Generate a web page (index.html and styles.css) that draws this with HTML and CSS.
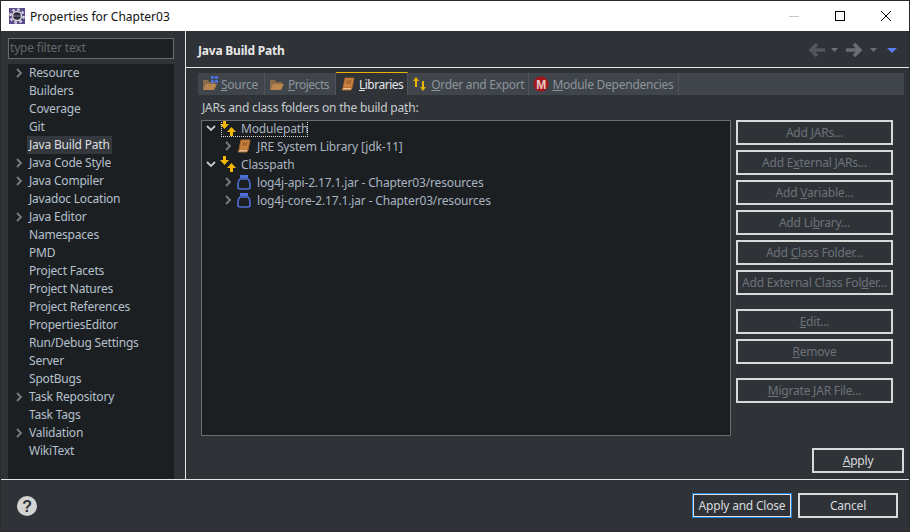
FILE: index.html
```html
<!DOCTYPE html>
<html lang="en">
<head>
    <meta charset="UTF-8">
    <title>Properties for Chapter03</title>
    <link rel="stylesheet" href="styles.css">
</head>
<body>
<svg class="defs" width="0" height="0">
    <symbol id="chev-r" viewBox="0 0 10 10"><path d="M3 1l4 4-4 4" fill="none" stroke="#7b7e81" stroke-width="1.8"/></symbol>
    <symbol id="chev-d" viewBox="0 0 10 10"><path d="M1 3l4 4 4-4" fill="none" stroke="#c4c6c8" stroke-width="1.8"/></symbol>
    <symbol id="folder" viewBox="0 0 16 16"><path d="M1 13V4h5l1 2h6v2H5l-3 5z" fill="#8a6a48"/><path d="M1 14l3-6h11l-3 6z" fill="#b9854f"/></symbol>
    <symbol id="book" viewBox="0 0 16 16"><path d="M5 2h9l-2 10H3z" fill="#c9813f" stroke="#a8662c"/><path d="M3 12l-1 2h9l1-2" fill="#e2c09a" stroke="#a8662c"/><path d="M6.500 5h5M6 7h5" stroke="#8a5526"/></symbol>
    <symbol id="paths" viewBox="0 0 16 16"><path d="M3 0h3v4h3L4.500 9 0 4h3z" fill="#f5b800"/><path d="M11.500 7l4.500 5h-3v4h-3v-4H7z" fill="#f5b800"/></symbol>
    <symbol id="jar" viewBox="0 0 14 16"><rect x="3" y="1" width="8" height="3" fill="#4f6fd8"/><path d="M3 5C1 7 1 8 1 10v3c0 1 1 2 2 2h8c1 0 2-1 2-2v-3c0-2 0-3-2-5z" fill="none" stroke="#4f6fd8" stroke-width="1.600"/></symbol>
</svg>
<div class="window">
    <div class="titlebar">
        <svg class="app-icon" width="16" height="16" viewBox="0 0 16 16">
            <rect width="16" height="16" fill="#5b4a8c"/>
            <circle cx="8" cy="8" r="6.600" fill="none" stroke="#d8d8dc" stroke-width="2.400" stroke-dasharray="2.600 2.580"/>
            <circle cx="8" cy="8" r="5.200" fill="#d8d8dc"/>
            <circle cx="8" cy="8" r="3.800" fill="#2b2a3a"/>
            <rect x="4" y="7.500" width="8" height="1" fill="#8a88a0"/>
        </svg>
        <span class="title">Properties for Chapter03</span>
        <div class="win-btns">
            <span class="win-btn"><svg width="10" height="10" viewBox="0 0 10 10"><path d="M0 5.500h10" stroke="#c8c8c8"/></svg></span>
            <span class="win-btn"><svg width="10" height="10" viewBox="0 0 10 10"><rect x=".5" y=".5" width="9" height="9" fill="none" stroke="#000"/></svg></span>
            <span class="win-btn"><svg width="10" height="10" viewBox="0 0 10 10"><path d="M0 0l10 10M10 0L0 10" stroke="#000"/></svg></span>
        </div>
    </div>

    <div class="main">
        <div class="sidebar">
            <div class="filter">type filter text</div>
            <ul class="nav">
                <li><svg class="chev"><use href="#chev-r"/></svg>Resource</li>
                <li>Builders</li>
                <li>Coverage</li>
                <li>Git</li>
                <li><span class="selected">Java Build Path</span></li>
                <li><svg class="chev"><use href="#chev-r"/></svg>Java Code Style</li>
                <li><svg class="chev"><use href="#chev-r"/></svg>Java Compiler</li>
                <li>Javadoc Location</li>
                <li><svg class="chev"><use href="#chev-r"/></svg>Java Editor</li>
                <li>Namespaces</li>
                <li>PMD</li>
                <li>Project Facets</li>
                <li>Project Natures</li>
                <li>Project References</li>
                <li>PropertiesEditor</li>
                <li>Run/Debug Settings</li>
                <li>Server</li>
                <li>SpotBugs</li>
                <li><svg class="chev"><use href="#chev-r"/></svg>Task Repository</li>
                <li>Task Tags</li>
                <li><svg class="chev"><use href="#chev-r"/></svg>Validation</li>
                <li>WikiText</li>
            </ul>
        </div>

        <div class="content">
            <div class="page-head">
                <h1>Java Build Path</h1>
                <div class="history">
                    <svg width="17" height="16" viewBox="0 0 17 16"><path d="M9 2L3 8l6 6M3 8h14" fill="none" stroke="#53575c" stroke-width="3.500"/></svg>
                    <svg class="caret" width="7" height="4" viewBox="0 0 7 4"><path d="M0 0h7L3.500 4z" fill="#6d7074"/></svg>
                    <svg class="fwd" width="16" height="16" viewBox="0 0 16 16"><path d="M8 2l6 6-6 6M14 8H0" fill="none" stroke="#6a6e72" stroke-width="3.500"/></svg>
                    <svg class="caret" width="7" height="4" viewBox="0 0 7 4"><path d="M0 0h7L3.500 4z" fill="#6d7074"/></svg>
                    <svg class="caret menu" width="10" height="5" viewBox="0 0 10 5"><path d="M0 0h10L5 5z" fill="#5b7cf0"/></svg>
                </div>
            </div>
            <div class="page-body">
                <div class="tabs">
                    <div class="tab tab-source"><svg class="ico"><use href="#folder"/></svg><svg class="grid-mark" width="7" height="7" viewBox="0 0 7 7"><path d="M0 0h3v3H0zM4 0h3v3H4zM0 4h3v3H0zM4 4h3v3H4z" fill="#4f6fd8"/></svg><span><u>S</u>ource</span></div>
                    <div class="tab tight tab-projects"><svg class="ico"><use href="#folder"/></svg><span><u>P</u>rojects</span></div>
                    <div class="tab tight active"><svg class="ico"><use href="#book"/></svg><span><u>L</u>ibraries</span></div>
                    <div class="tab tab-order"><svg class="ico" viewBox="0 0 16 16"><path d="M4 1l3 4H5v6H3V5H1zM11 15l-3-4h2V5h2v6h2z" fill="#e8b400"/></svg><span><u>O</u>rder and Export</span></div>
                    <div class="tab"><svg class="ico" viewBox="0 0 16 16"><circle cx="8" cy="8" r="7.500" fill="#a3171c"/><text x="8" y="12.500" text-anchor="middle" class="m-letter">M</text></svg><span><u>M</u>odule Dependencies</span></div>
                </div>
                <div class="tree-label">JARs and class folders on the build pa<u>t</u>h:</div>
                <div class="panel">
                    <div class="tree">
                        <div class="row first"><svg class="chev"><use href="#chev-d"/></svg><svg class="ico"><use href="#paths"/></svg><span>Modulepath</span><i class="focus"></i></div>
                        <div class="row sub"><svg class="chev"><use href="#chev-r"/></svg><svg class="ico"><use href="#book"/></svg><span>JRE System Library [jdk-11]</span></div>
                        <div class="row"><svg class="chev"><use href="#chev-d"/></svg><svg class="ico"><use href="#paths"/></svg><span>Classpath</span></div>
                        <div class="row sub"><svg class="chev"><use href="#chev-r"/></svg><svg class="ico"><use href="#jar"/></svg><span>log4j-api-2.17.1.jar - Chapter03/resources</span></div>
                        <div class="row sub"><svg class="chev"><use href="#chev-r"/></svg><svg class="ico"><use href="#jar"/></svg><span>log4j-core-2.17.1.jar - Chapter03/resources</span></div>
                    </div>
                    <div class="side-btns">
                        <button class="btn off">Add <u>J</u>ARs...</button>
                        <button class="btn off">Add E<u>x</u>ternal JARs...</button>
                        <button class="btn off">Add <u>V</u>ariable...</button>
                        <button class="btn off">Add Li<u>b</u>rary...</button>
                        <button class="btn off">Add <u>C</u>lass Folder...</button>
                        <button class="btn off">Add External Class Fol<u>d</u>er...</button>
                        <button class="btn off gap"><u>E</u>dit...</button>
                        <button class="btn off"><u>R</u>emove</button>
                        <button class="btn off gap"><u>M</u>igrate JAR File...</button>
                    </div>
                </div>
                <div class="apply-row"><button class="btn apply"><u>A</u>pply</button></div>
            </div>
        </div>
    </div>

    <div class="footer">
        <svg width="20" height="20" viewBox="0 0 20 20">
            <circle cx="10" cy="10" r="10" fill="#d4d4d4"/>
            <text x="10" y="15.500" text-anchor="middle" class="help">?</text>
        </svg>
        <div class="footer-btns">
            <button class="btn default">Apply and Close</button>
            <button class="btn cancel">Cancel</button>
        </div>
    </div>
</div>
</body>
</html>
```

FILE: styles.css
```css
* {
    box-sizing: border-box;
}
html, body {
    margin: 0;
    height: 100%;
}
body {
    background: #2f3338;
    color: #c8ccd0;
    font-family: "Noto Sans", "Noto Sans CJK KR", sans-serif;
    font-size: 12px;
    letter-spacing: -0.2px;
    overflow: hidden;
}
.defs {
    position: absolute;
}
.window {
    width: 910px;
    height: 532px;
    border: 1px solid #2a2a2a;
    display: flex;
    flex-direction: column;
}
.titlebar {
    height: 30px;
    background: #fff;
    color: #111;
    display: flex;
    align-items: center;
    padding-left: 8px;
    flex: none;
}
.title {
    margin-left: 5px;
    letter-spacing: 0;
}
.win-btns {
    margin-left: auto;
    display: flex;
}
.win-btn {
    width: 46px;
    height: 30px;
    display: flex;
    align-items: center;
    justify-content: center;
}
.win-btn svg {
    display: block;
}
.main {
    height: 448px;
    display: flex;
    flex: none;
}
.sidebar {
    width: 184px;
    padding: 7px 11px 0 7px;
    flex: none;
}
.filter {
    height: 21px;
    line-height: 18px;
    border: 1px solid #6a6d70;
    background: #1e2124;
    color: #62666a;
    padding-left: 1px;
}
.nav {
    list-style: none;
    margin: 5px 0 0;
    padding: 0 0 0 21px;
    height: 415px;
    background: #1c1f22;
}
.nav li {
    height: 18px;
    line-height: 18px;
    position: relative;
    white-space: nowrap;
    color: #b4c0cc;
}
.nav .chev {
    position: absolute;
    left: -15px;
    top: 4px;
}
.chev {
    width: 10px;
    height: 10px;
}
.selected {
    display: inline-block;
    background: #34383c;
    color: #dcdee0;
    padding: 0 2px;
    margin-left: -2px;
}
.content {
    flex: 1;
    border-left: 1px solid #e6e6e6;
    display: flex;
    flex-direction: column;
}
.page-head {
    height: 37px;
    flex: none;
    border-bottom: 1px solid #e6e6e6;
    display: flex;
    align-items: center;
    padding: 2px 12px 0 12px;
}
h1 {
    margin: 0;
    font-size: 12px;
    font-weight: 700;
    color: #e8e8e8;
}
.history {
    margin-left: auto;
    display: flex;
    align-items: center;
    gap: 6px;
}
.history .fwd {
    margin-left: 2px;
}
.history .caret + .fwd + .caret {
    margin-left: 2px;
}
.history .menu {
    margin-left: 4px;
}
.page-body {
    padding: 5px 5px 0 12px;
}
.tabs {
    height: 22px;
    background: #3f454b;
    display: flex;
}
.tab {
    display: flex;
    align-items: center;
    gap: 3px;
    padding: 0 4px;
    border-right: 1px solid #4e5459;
    color: #8d949a;
    position: relative;
    white-space: nowrap;
    letter-spacing: -0.25px;
}
.tab-source {
    padding-right: 6px;
}
.tab.tight {
    letter-spacing: -0.5px;
}
.tab-projects {
    padding-right: 6px;
}
.tab-order {
    letter-spacing: -0.3px;
}
.tab.active {
    background: #2f3338;
    border-top: 1px solid #e8b400;
    color: #e4e6e8;
    margin-top: -1px;
    height: 23px;
}
.ico {
    width: 16px;
    height: 16px;
    flex: none;
}
.grid-mark {
    position: absolute;
    left: 13px;
    top: 3px;
}
.m-letter {
    font-family: "Liberation Sans", sans-serif;
    font-size: 12px;
    font-weight: 700;
    fill: #e8c8c8;
}
.tree-label {
    height: 25px;
    line-height: 25px;
    padding-left: 4px;
    color: #c8ccd0;
}
.panel {
    display: flex;
    margin-left: 3px;
}
.tree {
    width: 530px;
    height: 316px;
    background: #1c1f22;
    border: 1px solid #6a6d70;
    padding-left: 4px;
    overflow: hidden;
}
.row {
    height: 18px;
    display: flex;
    align-items: center;
    position: relative;
    white-space: nowrap;
    color: #a8b4c0;
    letter-spacing: -0.15px;
}
.row.first {
    margin-top: -2px;
}
.row .chev {
    margin-right: 4px;
}
.row .ico {
    margin-right: 5px;
}
.row.sub {
    padding-left: 17px;
}
.row.sub .chev {
    margin-right: 3px;
}
.focus {
    position: absolute;
    left: 15px;
    top: 0;
    width: 87px;
    height: 18px;
    border: 1px dotted #d8d8d8;
    border-top: none;
}
.side-btns {
    margin-left: 5px;
    width: 157px;
    display: flex;
    flex-direction: column;
    gap: 5px;
}
.btn {
    height: 25px;
    padding: 0;
    font: inherit;
    letter-spacing: inherit;
    background: #2f3338;
    color: #d8dadc;
    border: 2px solid #d8d8d8;
}
.btn.off {
    color: #6c7278;
}
.btn.gap {
    margin-top: 9px;
}
.apply-row {
    display: flex;
    justify-content: flex-end;
    margin-top: 12px;
}
.apply {
    width: 92px;
}
.footer {
    flex: 1;
    border-top: 1px solid #e6e6e6;
    display: flex;
    align-items: center;
    padding: 0 11px 0 16px;
}
.help {
    font-family: "Liberation Sans", sans-serif;
    font-size: 16px;
    font-weight: 700;
    fill: #2f3338;
}
.footer-btns {
    margin-left: auto;
    display: flex;
    gap: 6px;
}
.footer-btns .btn {
    width: 100px;
}
.default {
    border-color: #1a7fd4;
    outline: 1px solid #e0e0e0;
    outline-offset: -2px;
}
```
